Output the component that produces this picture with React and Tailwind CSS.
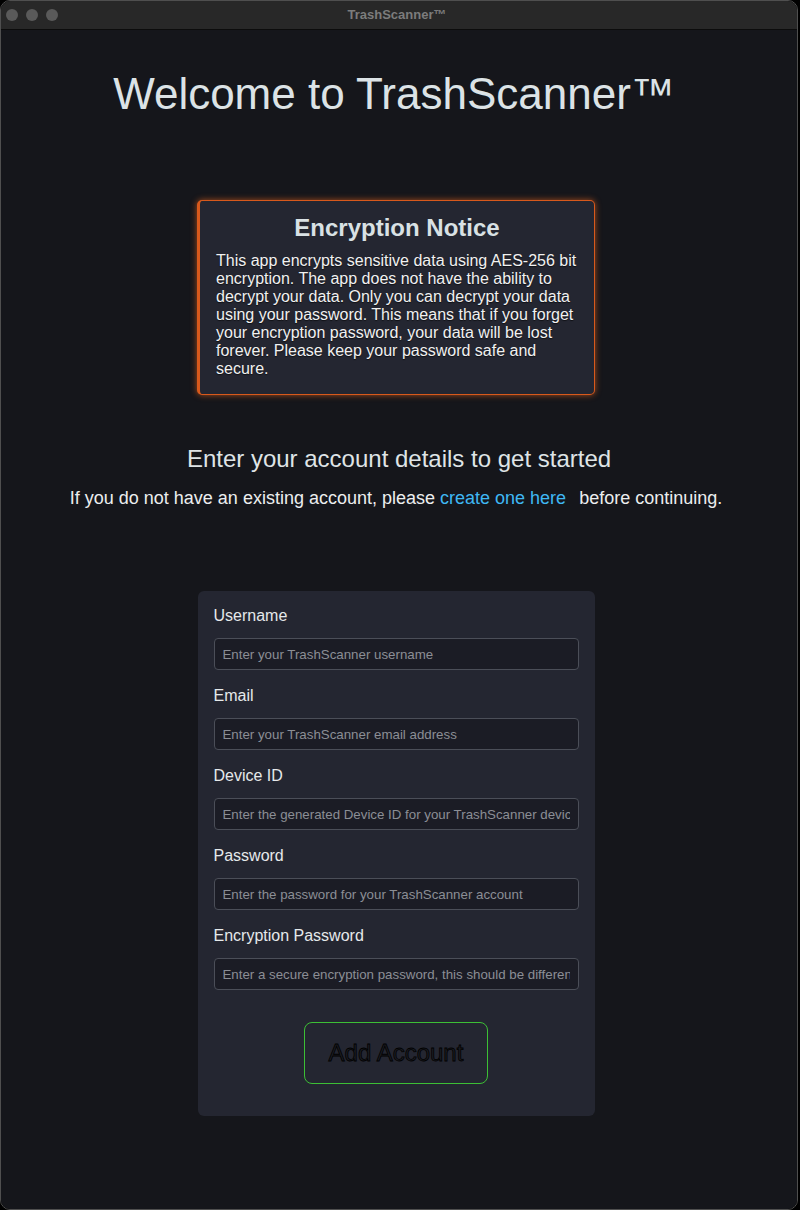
export default function App() {
  const fields = [
    { label: "Username", placeholder: "Enter your TrashScanner username" },
    { label: "Email", placeholder: "Enter your TrashScanner email address" },
    { label: "Device ID", placeholder: "Enter the generated Device ID for your TrashScanner device" },
    { label: "Password", placeholder: "Enter the password for your TrashScanner account", type: "password" },
    {
      label: "Encryption Password",
      placeholder: "Enter a secure encryption password, this should be different from your account password",
      type: "password",
    },
  ];

  return (
    <div className="w-[800px] h-[1210px] bg-black font-['Liberation_Sans',Arial,sans-serif]">
      <div className="w-[798px] h-[1210px] rounded-[10px] border border-[#4f4f4f] overflow-hidden flex flex-col">
        {/* title bar */}
        <div className="relative h-[29px] shrink-0 bg-[#282828] border-b border-[#0c0c0c] flex items-center justify-center">
          <div className="absolute left-[5px] top-[8px] flex gap-[8px]">
            <span className="w-[12px] h-[12px] rounded-full bg-[#5a5a5a]" />
            <span className="w-[12px] h-[12px] rounded-full bg-[#5a5a5a]" />
            <span className="w-[12px] h-[12px] rounded-full bg-[#5a5a5a]" />
          </div>
          <span className="text-[13px] font-bold text-[#7c7c7c] pr-[4px]">TrashScanner™</span>
        </div>

        {/* content */}
        <div className="flex-1 bg-[#15161b] flex flex-col items-center pr-[6px]">
          <h1 className="mt-[39px] text-[44px] leading-[50px] text-[#dce3e6] pr-[4px]">Welcome to TrashScanner™</h1>

          <div className="mt-[81px] w-[398px] rounded-[5px] border border-l-[3px] border-[#d8591c] bg-[#242631] shadow-[0_0_6px_rgba(230,100,30,0.7)] pt-[13px] pb-[16px] pl-[16px] pr-[16px]">
            <h2 className="text-center text-[24px] leading-[28px] font-bold text-[#d9e1e4]">Encryption Notice</h2>
            <p className="mt-[10px] text-[16px] leading-[18px] text-[#f1f1f1] [text-shadow:0_1px_1px_rgba(0,0,0,0.6)]">
              This app encrypts sensitive data using AES-256 bit encryption. The app does not have the ability to decrypt
              your data. Only you can decrypt your data using your password. This means that if you forget your encryption
              password, your data will be lost forever. Please keep your password safe and secure.
            </p>
          </div>

          <h3 className="mt-[50px] pl-[6px] text-[24px] leading-[28px] text-[#dfe4e6]">
            Enter your account details to get started
          </h3>
          <p className="mt-[15px] text-[18px] leading-[21px] text-[#eceeef]">
            If you do not have an existing account, please{" "}
            <a href="#" className="text-[#3fb8f4] mr-[8px]">
              create one here
            </a>{" "}
            before continuing.
          </p>

          <form
            className="mt-[82px] w-[397px] rounded-[6px] bg-[#242631] px-[16px] pt-[16px] pb-[32px] flex flex-col"
            onSubmit={(e) => e.preventDefault()}
          >
            <div className="flex flex-col gap-[17px]">
              {fields.map((f) => (
                <div key={f.label} className="flex flex-col">
                  <label className="text-[16px] leading-[18px] text-[#e6e9eb] mb-[13px]">{f.label}</label>
                  <input
                    type={f.type || "text"}
                    placeholder={f.placeholder}
                    className="h-[32px] w-full rounded-[4px] border border-[#4b4e58] bg-[#1b1c25] pl-[8px] pr-[8px] text-[13.3px] text-[#e6e9eb] placeholder:text-[#8b8e95] outline-none"
                  />
                </div>
              ))}
            </div>
            <button
              type="submit"
              className="mt-[32px] self-center w-[184px] h-[62px] rounded-[8px] border border-[#3cbf35] bg-transparent text-[24px] text-[#1c1d23] [-webkit-text-stroke:0.8px_#000]"
            >
              Add Account
            </button>
          </form>
        </div>
      </div>
    </div>
  );
}
